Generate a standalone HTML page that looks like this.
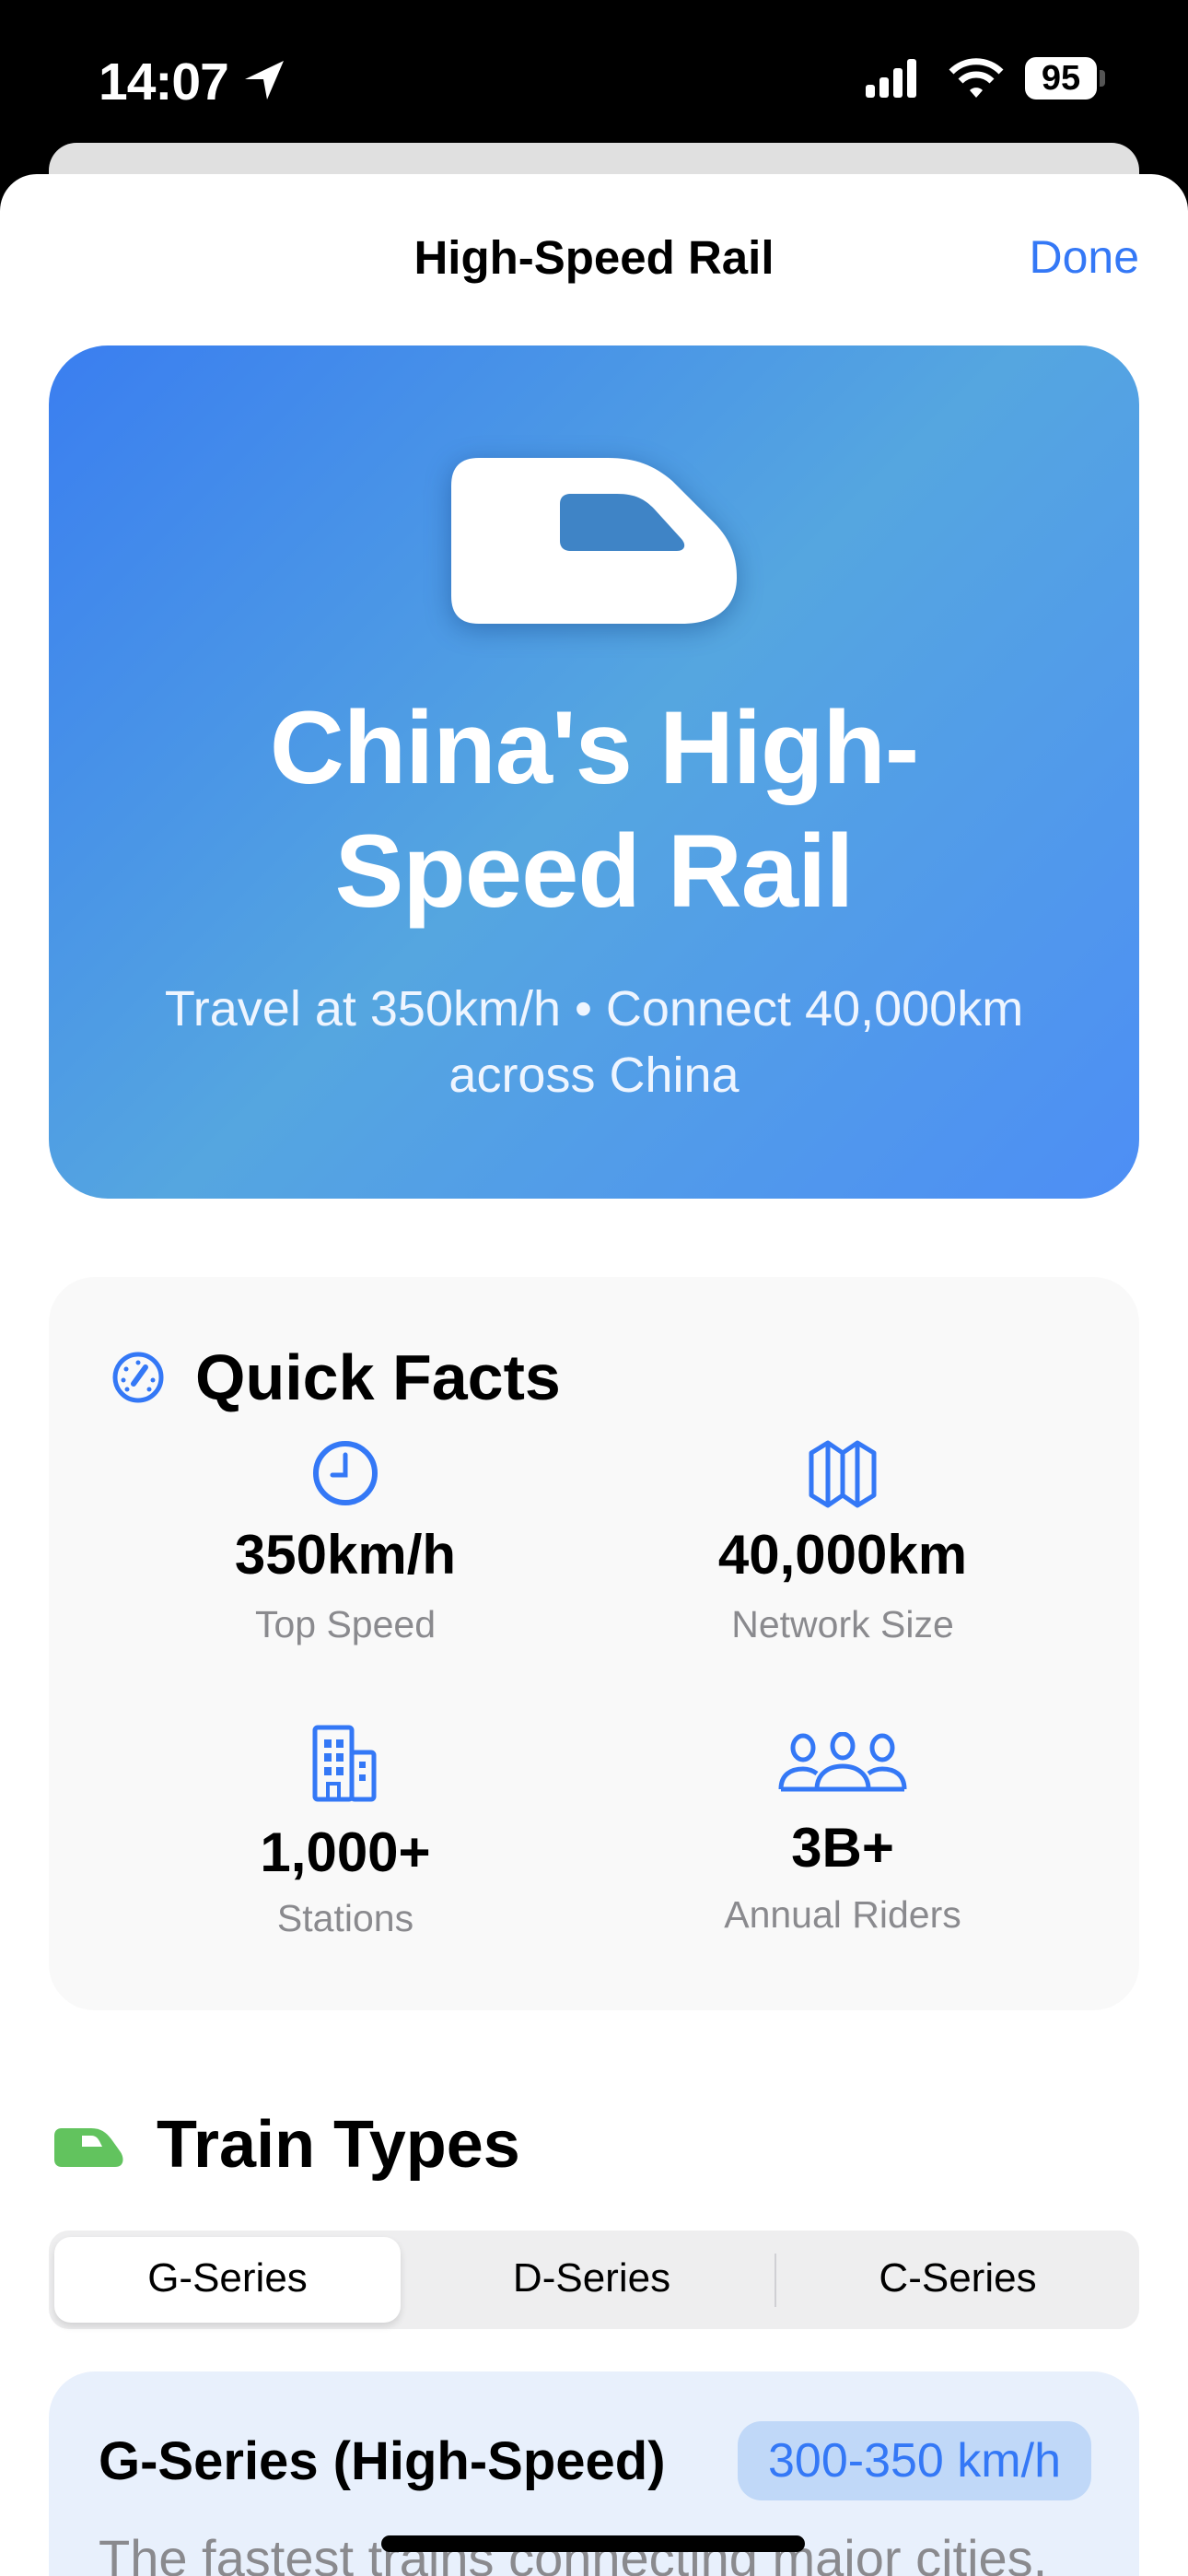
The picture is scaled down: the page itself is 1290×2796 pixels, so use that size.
<!DOCTYPE html>
<html><head><meta charset="utf-8"><style>
*{margin:0;padding:0;box-sizing:border-box}
html,body{width:1290px;height:2796px;overflow:hidden}
body{background:#fff;position:relative;font-family:"Liberation Sans",sans-serif}
.a{position:absolute}
.c{text-align:center}
</style></head><body>
<div class="a" style="left:0;top:0;width:1290px;height:240px;background:#000"></div>
<div class="a" style="left:107px;top:56px;font-size:57px;color:#fff;font-weight:600;letter-spacing:-1px">14:07</div>
<svg class="a" style="left:262px;top:64px" width="50" height="45" viewBox="0 0 50 45"><path d="M46 2 L4 22 L24 22 L28 44 Z" fill="#fff"/></svg>
<svg class="a" style="left:940px;top:62px" width="70" height="46"><rect x="0" y="30" width="10" height="14" rx="3" fill="#fff"/><rect x="15" y="22" width="10" height="22" rx="3" fill="#fff"/><rect x="30" y="12" width="10" height="32" rx="3" fill="#fff"/><rect x="45" y="2" width="10" height="42" rx="3" fill="#fff"/></svg>
<svg class="a" style="left:1030px;top:62px" width="60" height="46" viewBox="0 0 60 46"><path d="M3 16 A38 38 0 0 1 57 16" stroke="#fff" stroke-width="7" fill="none"/><path d="M13 26 A24 24 0 0 1 47 26" stroke="#fff" stroke-width="7" fill="none"/><path d="M23 36 L30 44 L37 36 A10 10 0 0 0 23 36Z" fill="#fff"/></svg>
<div class="a" style="left:1113px;top:62px;width:78px;height:46px;background:#fff;border-radius:12px;color:#000;font-size:38px;font-weight:700;text-align:center;line-height:46px">95</div>
<div class="a" style="left:1194px;top:76px;width:6px;height:18px;background:#555;border-radius:0 4px 4px 0"></div>

<div class="a" style="left:53px;top:155px;width:1184px;height:80px;background:#e0e0e0;border-radius:30px 30px 0 0"></div>
<div class="a" style="left:0;top:189px;width:1290px;height:2700px;background:#fff;border-radius:40px 40px 0 0"></div>

<div class="a c" style="left:0;width:1290px;top:250px;font-size:51px;font-weight:600;color:#000">High-Speed Rail</div>
<div class="a" style="right:53px;top:250px;font-size:50px;color:#3478f6">Done</div>

<div class="a" style="left:53px;top:375px;width:1184px;height:926px;border-radius:64px;background:linear-gradient(135deg,#3a7ef0 0%,#55a6e0 50%,#4d8ef5 100%)"></div>
<svg class="a" style="left:470px;top:480px;filter:drop-shadow(0 6px 14px rgba(0,40,100,0.35))" width="350" height="220" viewBox="-20 -17 350 220"><path d="M30 0 H170 C200 0 220 8 240 25 L285 70 C305 90 310 110 310 130 C310 160 290 180 250 180 H30 C10 180 0 170 0 150 V30 C0 10 10 0 30 0Z" fill="#fff"/><path d="M130 39 H180 C200 39 210 45 220 55 L250 88 C256 95 253 101 245 101 H130 C122 101 118 97 118 90 V50 C118 43 122 39 130 39Z" fill="#3f84c6"/></svg>
<div class="a c" style="left:53px;width:1184px;top:745px;font-size:112px;line-height:134px;font-weight:700;color:#fff;letter-spacing:-1px">China's High-<br>Speed Rail</div>
<div class="a c" style="left:53px;width:1184px;top:1059px;font-size:54px;line-height:72px;color:#eef5ff">Travel at 350km/h • Connect 40,000km<br>across China</div>

<div class="a" style="left:53px;top:1386px;width:1184px;height:796px;background:#f9f9f9;border-radius:50px"></div>
<svg class="a" style="left:121px;top:1466px" width="58" height="58" viewBox="0 0 58 58"><circle cx="29" cy="29" r="25" stroke="#3478f6" stroke-width="5" fill="none"/><path d="M24 36 L37 18" stroke="#3478f6" stroke-width="6" stroke-linecap="round"/><g fill="#3478f6"><circle cx="29" cy="13" r="2.5"/><circle cx="16" cy="20" r="2.5"/><circle cx="13" cy="32" r="2.5"/><circle cx="45" cy="32" r="2.5"/><circle cx="17" cy="42" r="2.5"/><circle cx="41" cy="42" r="2.5"/></g></svg>
<div class="a" style="left:212px;top:1455px;font-size:70px;font-weight:700;color:#000">Quick Facts</div>

<svg class="a" style="left:339px;top:1563px" width="72" height="72" viewBox="0 0 72 72"><circle cx="36" cy="36" r="32" stroke="#3478f6" stroke-width="6" fill="none"/><path d="M36 16 V38 H22" stroke="#3478f6" stroke-width="5" fill="none" stroke-linecap="round"/></svg>
<div class="a c" style="left:175px;width:400px;top:1653px;font-size:60px;font-weight:700;color:#000">350km/h</div>
<div class="a c" style="left:175px;width:400px;top:1740px;font-size:41px;color:#8a8a8e">Top Speed</div>

<svg class="a" style="left:877px;top:1563px" width="76" height="74" viewBox="0 0 76 74"><path d="M4 14 L22 3 L38 14 L54 3 L72 14 V60 L54 71 L38 60 L22 71 L4 60 Z M22 3 V71 M38 14 V60 M54 3 V71" stroke="#3478f6" stroke-width="5" fill="none" stroke-linejoin="round"/></svg>
<div class="a c" style="left:715px;width:400px;top:1653px;font-size:60px;font-weight:700;color:#000">40,000km</div>
<div class="a c" style="left:715px;width:400px;top:1740px;font-size:41px;color:#8a8a8e">Network Size</div>

<svg class="a" style="left:339px;top:1872px" width="72" height="84" viewBox="0 0 72 84"><rect x="3" y="3" width="40" height="78" rx="3" stroke="#3478f6" stroke-width="5" fill="none"/><rect x="43" y="30" width="24" height="51" rx="3" stroke="#3478f6" stroke-width="5" fill="none"/><g fill="#3478f6"><rect x="13" y="16" width="8" height="9"/><rect x="26" y="16" width="8" height="9"/><rect x="13" y="31" width="8" height="9"/><rect x="26" y="31" width="8" height="9"/><rect x="13" y="46" width="8" height="9"/><rect x="26" y="46" width="8" height="9"/><rect x="51" y="40" width="7" height="7"/><rect x="51" y="54" width="7" height="7"/></g><rect x="17" y="64" width="12" height="17" stroke="#3478f6" stroke-width="4" fill="none"/></svg>
<div class="a c" style="left:175px;width:400px;top:1976px;font-size:60px;font-weight:700;color:#000">1,000+</div>
<div class="a c" style="left:175px;width:400px;top:2059px;font-size:41px;color:#8a8a8e">Stations</div>

<svg class="a" style="left:845px;top:1880px" width="140" height="66" viewBox="0 0 140 66"><g stroke="#3478f6" stroke-width="5" fill="none"><ellipse cx="27" cy="17" rx="11" ry="13"/><ellipse cx="70" cy="15" rx="11" ry="13"/><ellipse cx="113" cy="17" rx="11" ry="13"/><path d="M3 62 C3 46 14 40 27 40 C33 40 38 42 42 45"/><path d="M137 62 C137 46 126 40 113 40 C107 40 102 42 98 45"/><path d="M42 62 C42 46 54 37 70 37 C86 37 98 46 98 62 Z"/><path d="M3 62 H42 M98 62 H137"/></g></svg>
<div class="a c" style="left:715px;width:400px;top:1971px;font-size:60px;font-weight:700;color:#000">3B+</div>
<div class="a c" style="left:715px;width:400px;top:2055px;font-size:41px;color:#8a8a8e">Annual Riders</div>

<svg class="a" style="left:59px;top:2310px" width="76" height="42" viewBox="0 0 76 42"><path d="M8 0 H40 C50 0 56 4 62 12 L72 26 C76 32 76 42 66 42 H8 C3 42 0 39 0 34 V8 C0 3 3 0 8 0Z" fill="#62c35e"/><path d="M30 8 H40 C46 8 48 12 50 16 L52 20 H30 Z" fill="#fff"/></svg>
<div class="a" style="left:170px;top:2287px;font-size:72px;font-weight:700;color:#000">Train Types</div>

<div class="a" style="left:53px;top:2421px;width:1184px;height:107px;background:#eeeeef;border-radius:22px"></div>
<div class="a" style="left:59px;top:2428px;width:376px;height:93px;background:#fff;border-radius:18px;box-shadow:0 4px 8px rgba(0,0,0,0.12)"></div>
<div class="a" style="left:841px;top:2446px;width:2px;height:58px;background:#d0d0d4"></div>
<div class="a c" style="left:59px;width:376px;top:2448px;font-size:44px;color:#000">G-Series</div>
<div class="a c" style="left:445px;width:395px;top:2448px;font-size:44px;color:#000">D-Series</div>
<div class="a c" style="left:843px;width:394px;top:2448px;font-size:44px;color:#000">C-Series</div>

<div class="a" style="left:53px;top:2574px;width:1184px;height:300px;background:#e8f0fc;border-radius:50px"></div>
<div class="a" style="left:107px;top:2638px;font-size:58px;font-weight:700;color:#000">G-Series (High-Speed)</div>
<div class="a c" style="left:801px;top:2628px;width:384px;height:86px;background:#c0d8f8;border-radius:26px;font-size:52px;line-height:86px;color:#3478f6">300-350 km/h</div>
<div class="a" style="left:107px;top:2744px;font-size:56px;color:#8a8a8e;white-space:nowrap">The fastest trains connecting major cities.</div>
<div class="a" style="left:414px;top:2752px;width:460px;height:18px;background:#000;border-radius:9px"></div>
</body></html>
